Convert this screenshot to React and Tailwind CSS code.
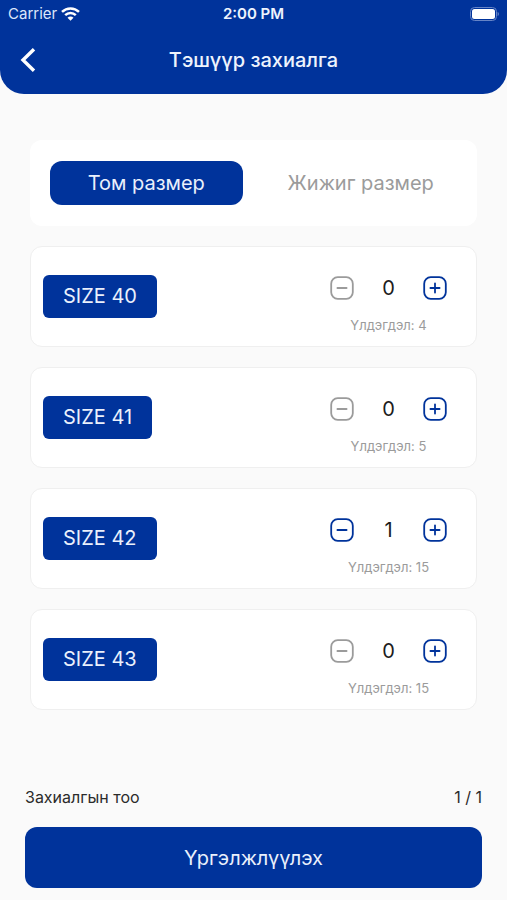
import { useState } from "react";

const SIZES = [
  { name: "SIZE 40", stock: 4 },
  { name: "SIZE 41", stock: 5 },
  { name: "SIZE 42", stock: 15 },
  { name: "SIZE 43", stock: 15 },
];

function StatusBar() {
  return (
    <div className="grid h-7 grid-cols-3 items-center px-2 text-[15px]">
      <div className="flex items-center gap-1">
        <span className="text-[#dce6fa]">Carrier</span>
        <svg width="19" height="14" viewBox="0 0 19 14" fill="none" stroke="white" strokeWidth="2.5" aria-hidden="true">
          <path d="M1 4.9C5.8 0.3 13.2 0.3 18 4.9" />
          <path d="M4.2 8.2C7.2 5.3 11.8 5.3 14.8 8.2" />
          <path d="M9.5 13.8L6.5 10.8C8.2 9.2 10.8 9.2 12.5 10.8Z" fill="white" stroke="none" />
        </svg>
      </div>
      <span className="text-center font-semibold text-[#eef3fd]">2:00 PM</span>
      <svg className="justify-self-end" width="29" height="14" viewBox="0 0 29 14" aria-hidden="true">
        <rect x="0.5" y="0.5" width="26" height="13" rx="4" fill="none" stroke="#6684c6" />
        <rect x="2" y="2" width="23" height="10" rx="2.5" fill="white" />
        <path d="M27.6 5C29.3 5.6 29.3 8.4 27.6 9Z" fill="#6684c6" />
      </svg>
    </div>
  );
}

function StepButton({ label, plus, disabled, onClick }) {
  return (
    <button
      type="button"
      aria-label={label}
      disabled={disabled}
      onClick={onClick}
      className={disabled ? "text-[#9b9b9b]" : "text-[#00339b]"}
    >
      <svg
        className="block"
        width="24"
        height="24"
        viewBox="0 0 24 24"
        fill="none"
        stroke="currentColor"
        strokeWidth="1.8"
        strokeLinecap="round"
        aria-hidden="true"
      >
        <rect x="1.2" y="1.2" width="21.6" height="21.6" rx="6.5" />
        <path d="M7.4 12H16.6" />
        {plus && <path d="M12 7.4V16.6" />}
      </svg>
    </button>
  );
}

function SizeCard({ name, stock, count, canAdd, onChange }) {
  return (
    <li className="flex h-[101px] items-center justify-between rounded-xl border border-[#efefef] bg-white pl-3 pr-[29px]">
      <span className="rounded-md bg-[#00339b] px-5 py-2 text-xl leading-[27px] text-[#eaf0fc]">{name}</span>
      <div className="flex flex-col items-center gap-4 pt-4">
        <div className="flex w-[117px] items-center justify-between">
          <StepButton label={name + " −"} disabled={count === 0} onClick={() => onChange(count - 1)} />
          <output className="text-xl leading-6 text-[#1c1c1c]">{count}</output>
          <StepButton label={name + " +"} plus disabled={!canAdd} onClick={() => onChange(count + 1)} />
        </div>
        <span className="text-[13px] leading-[18px] text-[#9b9b9b]">Үлдэгдэл: {stock}</span>
      </div>
    </li>
  );
}

export default function App() {
  const [counts, setCounts] = useState([0, 0, 1, 0]);
  const [tab, setTab] = useState(0);
  const total = counts.reduce((a, b) => a + b, 0);

  return (
    <div className="flex min-h-screen flex-col bg-[#fafafa] font-['Inter','Liberation_Sans',sans-serif]">
      <header className="rounded-b-3xl bg-[#00339b] pb-3 text-white">
        <StatusBar />
        <div className="grid h-[54px] grid-cols-[40px_1fr_40px] items-center pt-2.5 px-3">
          <button type="button" aria-label="Буцах" className="justify-self-start pl-2">
            <svg width="16" height="24" viewBox="0 0 16 24" fill="none" stroke="white" strokeWidth="3.4" aria-hidden="true">
              <path d="M14 1.2L3 12L14 22.8" />
            </svg>
          </button>
          <h1 className="text-center text-xl font-medium text-[#eef3fd]">Тэшүүр захиалга</h1>
        </div>
      </header>

      <main className="flex flex-1 flex-col gap-5 px-[30px] pt-[46px]">
        <div className="grid grid-cols-2 gap-[22px] rounded-xl bg-white px-5 py-[21px]">
          {["Том размер", "Жижиг размер"].map((label, i) => (
            <button
              key={label}
              type="button"
              aria-pressed={tab === i}
              onClick={() => setTab(i)}
              className={
                "h-11 rounded-xl text-xl whitespace-nowrap " +
                (tab === i ? "bg-[#00339b] text-[#eaf0fc]" : "text-[#9b9b9b]")
              }
            >
              {label}
            </button>
          ))}
        </div>
        <ul className="flex flex-col gap-5">
          {SIZES.map((size, i) => (
            <SizeCard
              key={size.name}
              name={size.name}
              stock={size.stock}
              count={counts[i]}
              canAdd={counts[i] < size.stock}
              onChange={(n) => setCounts(counts.map((c, j) => (j === i ? n : c)))}
            />
          ))}
        </ul>
      </main>

      <footer className="flex flex-col gap-[18px] px-[25px] pb-3">
        <div className="flex justify-between text-base text-[#2b2b2b]">
          <span>Захиалгын тоо</span>
          <span>{total} / 1</span>
        </div>
        <button type="button" className="h-[61px] rounded-xl bg-[#00339b] text-xl text-[#eaf0fc]">
          Үргэлжлүүлэх
        </button>
      </footer>
    </div>
  );
}
